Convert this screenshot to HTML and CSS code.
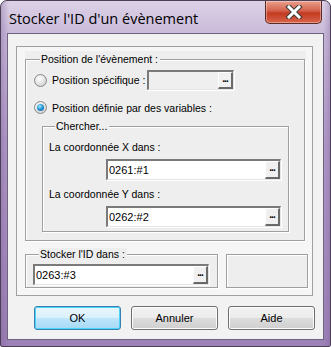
FILE: index.html
```html
<html>
    <head>
        <title>Stocker l'ID d'un évènement</title>
        <link rel="stylesheet" href="styles.css">
    </head>
    <body>
        <div class="window">
            <div class="titlebar">
                <span class="title">Stocker l'ID d'un évènement</span>
                <div class="close">
                    <svg width="18" height="14" viewBox="0 0 18 14">
                        <path d="M4 2 L14 12 M14 2 L4 12" stroke="#3b3b3b" stroke-width="5" stroke-linecap="square"/>
                        <path d="M4 2 L14 12 M14 2 L4 12" stroke="#ffffff" stroke-width="3" stroke-linecap="square"/>
                    </svg>
                </div>
            </div>
            <div class="client">
                <div class="panel">
                    <div class="band band-pos">
                        <fieldset class="group group-pos">
                            <legend>Position de l'évènement :</legend>
                            <div class="row row-specific">
                                <label class="radio radio-specific"><span class="dot"></span>Position spécifique :</label>
                                <div class="edit edit-disabled"><span class="value"></span><span class="ellipsis">...</span></div>
                            </div>
                            <div class="row row-vars">
                                <label class="radio"><span class="dot checked"></span>Position définie par des variables :</label>
                            </div>
                            <fieldset class="group group-search">
                                <legend>Chercher...</legend>
                                <div class="caption caption-x">La coordonnée X dans :</div>
                                <div class="edit edit-coord"><span class="value">0261:#1</span><span class="ellipsis">...</span></div>
                                <div class="caption caption-y">La coordonnée Y dans :</div>
                                <div class="edit edit-coord"><span class="value">0262:#2</span><span class="ellipsis">...</span></div>
                            </fieldset>
                        </fieldset>
                    </div>
                    <div class="bottom-row">
                        <fieldset class="group group-store">
                            <legend>Stocker l'ID dans :</legend>
                            <div class="edit edit-store"><span class="value">0263:#3</span><span class="ellipsis">...</span></div>
                        </fieldset>
                        <div class="blank-box"></div>
                    </div>
                </div>
                <div class="buttons">
                    <button class="btn btn-default">OK</button>
                    <button class="btn">Annuler</button>
                    <button class="btn">Aide</button>
                </div>
            </div>
        </div>
    </body>
</html>
```

FILE: styles.css
```css
body{
    margin: 0;
    background: #ffffff;
    font-family: 'Liberation Sans', Arial, sans-serif;
    font-size: 10.5px;
    color: #000;
}
.window{
    width: 331px;
    height: 347px;
    box-sizing: border-box;
    border: 1px solid #4a3f55;
    border-radius: 7px 7px 2px 2px;
    background:
        linear-gradient(90deg, rgba(120,90,150,0.35) 0, rgba(255,255,255,0) 8px, rgba(255,255,255,0) 322px, rgba(120,90,150,0.35) 330px),
        linear-gradient(180deg, #dcd2e6 0, #cbbcdb 30px, #b29bc8 140px, #9c81b6 347px);
    display: flex;
    flex-direction: column;
}
.titlebar{
    height: 32px;
    display: flex;
    align-items: flex-start;
}
.title{
    font-family: 'Open Sans', 'Noto Sans', sans-serif;
    font-size: 14.5px;
    color: #000;
    margin-left: 8px;
    margin-top: 8px;
    line-height: 20px;
}
.close{
    margin-left: auto;
    margin-right: 8px;
    width: 57px;
    height: 23px;
    box-sizing: border-box;
    border: 1px solid #5c2a25;
    border-top: none;
    border-radius: 0 0 5px 5px;
    background: linear-gradient(180deg, #e8a08e 0, #d4604a 45%, #c33a20 55%, #d9654c 100%);
    box-shadow: inset 0 0 0 1px rgba(255,255,255,0.35);
    display: flex;
    align-items: center;
    justify-content: center;
}
.client{
    margin-left: 6px;
    width: 317px;
    height: 307px;
    box-sizing: border-box;
    border: 1px solid #6f6280;
    background: #f2f2f2;
    display: flex;
    flex-direction: column;
}
.panel{
    margin-left: 8px;
    margin-top: 12px;
    width: 297px;
    height: 250px;
    box-sizing: border-box;
    border: 1px solid #a0a0a0;
    background: #f6f6f6;
    display: flex;
    flex-direction: column;
}
.band-pos{
    margin-left: 8px;
    margin-top: 4px;
    width: 281px;
    padding-top: 2px;
    background: #eeeeee;
}
.group{
    margin: 0;
    padding: 0;
    border: 1px solid #a0a0a0;
    box-shadow: 1px 1px 0 #ffffff, inset 1px 1px 0 #ffffff;
    background: #eeeeee;
    min-width: 0;
}
.group legend{
    padding: 0 2px 0 1px;
    margin-left: 6px;
    line-height: 13px;
    background: #eeeeee;
}
.group-pos{
    width: 280px;
    height: 188px;
    box-sizing: border-box;
    padding: 0 0 0 8px;
}
.row{
    display: flex;
    align-items: center;
}
.row-specific{
    margin-top: 4px;
    height: 20px;
}
.row-vars{
    margin-top: 11px;
    height: 13px;
}
.radio{
    display: flex;
    align-items: center;
    gap: 5px;
    white-space: nowrap;
}
.radio-specific{
    width: 113px;
}
.dot{
    width: 13px;
    height: 13px;
    box-sizing: border-box;
    border-radius: 50%;
    border: 1px solid #8a8a8a;
    background: radial-gradient(circle at 40% 35%, #ffffff 0, #e6e6e6 45%, #c4c4c4 100%);
    display: flex;
    align-items: center;
    justify-content: center;
}
.dot.checked::after{
    content: "";
    width: 7px;
    height: 7px;
    border-radius: 50%;
    background: radial-gradient(circle at 40% 35%, #9ee8ff 0, #2a9ad6 45%, #0c4f8e 100%);
}
.edit{
    display: flex;
    align-items: stretch;
    box-sizing: border-box;
    background: #ffffff;
    border-top: 2px solid #7a7a7a;
    border-left: 2px solid #7a7a7a;
    border-right: 1px solid #e4e4e4;
    border-bottom: 1px solid #e4e4e4;
    box-shadow: 1px 1px 0 #ffffff;
}
.edit .value{
    flex: 1;
    padding-left: 1px;
    font-size: 11px;
    display: flex;
    align-items: center;
}
.ellipsis{
    width: 15px;
    box-sizing: border-box;
    background: #f0f0f0;
    border-top: 1px solid #ffffff;
    border-left: 1px solid #ffffff;
    border-right: 2px solid #6a6a6a;
    border-bottom: 2px solid #6a6a6a;
    font-weight: bold;
    font-size: 10px;
    line-height: 10px;
    text-align: center;
    letter-spacing: -1px;
    padding-top: 1px;
}
.edit-disabled{
    width: 87px;
    height: 20px;
    background: #efefef;
}
.group-search{
    margin-top: 6px;
    margin-left: 8px;
    width: 247px;
    height: 112px;
    box-sizing: border-box;
    padding: 0 7px 0 6px;
}
.caption{
    line-height: 13px;
    white-space: nowrap;
}
.caption-x{
    margin-top: 8px;
}
.caption-y{
    margin-top: 8px;
}
.edit-coord{
    margin-top: 5px;
    margin-left: 57px;
    height: 21px;
}
.bottom-row{
    margin-top: 7px;
    margin-left: 8px;
    display: flex;
    gap: 8px;
}
.group-store{
    width: 193px;
    height: 40px;
    box-sizing: border-box;
    padding: 0 0 0 7px;
}
.edit-store{
    margin-top: 3px;
    width: 176px;
    height: 21px;
}
.blank-box{
    margin-top: 6px;
    width: 82px;
    height: 34px;
    box-sizing: border-box;
    border: 1px solid #a0a0a0;
    box-shadow: 1px 1px 0 #ffffff, inset 1px 1px 0 #ffffff;
    background: #eeeeee;
}
.buttons{
    margin-top: 10px;
    margin-left: 26px;
    display: flex;
    gap: 10px;
}
.btn{
    width: 87px;
    height: 24px;
    border: 1px solid #707070;
    border-radius: 3px;
    background: linear-gradient(180deg, #f2f2f2 0, #ebebeb 50%, #dddddd 50%, #cfcfcf 100%);
    box-shadow: inset 0 0 0 1px #fbfbfb;
    font-family: 'Liberation Sans', Arial, sans-serif;
    font-size: 11px;
    color: #000;
    padding: 0;
}
.btn-default{
    border-color: #3c7fb1;
    box-shadow: inset 0 0 0 1px #48d4fb;
    background: linear-gradient(180deg, #eaf6fd 0, #d9f0fc 50%, #bee6fd 50%, #a7d9f5 100%);
}
```
